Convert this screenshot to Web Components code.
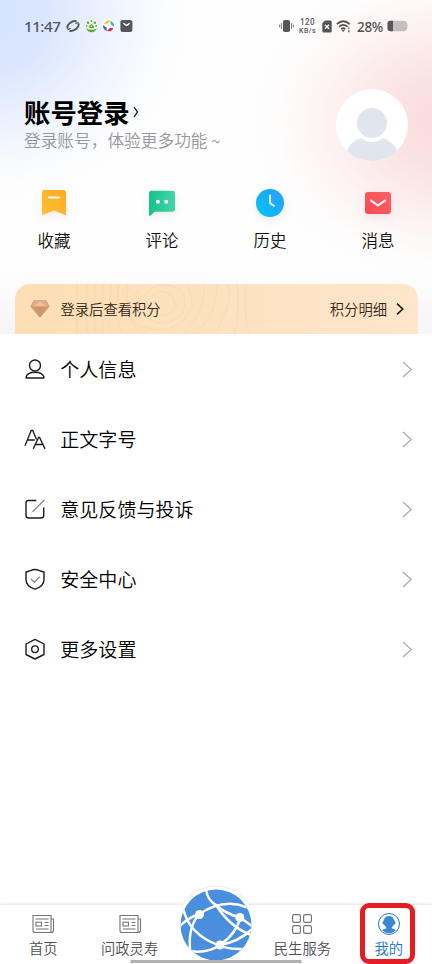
<!DOCTYPE html>
<html lang="zh-CN">
<head>
<meta charset="utf-8">
<title>我的</title>
<style>
html,body{margin:0;padding:0;background:#fff}
body{font-family:"Noto Sans CJK SC",sans-serif;font-weight:350;color:#111;overflow:hidden}
</style>
</head>
<body>
<my-app></my-app>
<script>
const define=(name,html,render)=>customElements.define(name,class extends HTMLElement{
  connectedCallback(){
    if(this.shadowRoot)return;
    const t=document.createElement('template');
    t.innerHTML=render?render(this):html;
    this.attachShadow({mode:'open'}).appendChild(t.content.cloneNode(true));
  }
});

define('status-bar',`
<style>
:host{display:flex;justify-content:space-between;align-items:center;height:52px;padding:0 24px;box-sizing:border-box;font-family:"Noto Sans",sans-serif;color:#50555e}
div{display:flex;align-items:center}
svg{display:block;flex:none}
.time{font-size:15.2px;font-weight:500;width:42px;line-height:20px;letter-spacing:-.5px}
.l svg{margin-right:4.5px}
.speed{font-family:Roboto,sans-serif;text-align:center;width:19px;margin:0 5px 0 4px;font-weight:500;color:#5c5a5b;white-space:nowrap;flex-direction:column}
.speed span{display:block;height:9px;line-height:9px;font-size:8.2px;letter-spacing:.3px}
.speed b{display:block;height:8px;line-height:8px;font-weight:500;font-size:7px;letter-spacing:.4px}
.pct{font-size:13.5px;font-weight:500;color:#504e50;width:27px;margin:1px 3px 0 5px;line-height:20px;white-space:nowrap;letter-spacing:-.3px}
.r{margin-right:-1px}
</style>
<div class="l"><span class="time">11:47</span>
<svg width="14" height="14" viewBox="0 0 14 14" fill="none" stroke="#50555e"><path d="M1.500 9.500C.5 5.500 6 1.200 10.500 2.200M12.500 4.500C13.500 8.500 8 12.800 3.500 11.800" stroke-width="1.900"/><path d="M1.500 9.500Q2.300 11.500 4.500 9.200M12.500 4.500Q11.700 2.500 9.500 4.800" stroke-width="1.200"/></svg>
<svg width="13" height="14" viewBox="0 0 13 14"><circle cx="6.5" cy="7" r="6.3" fill="#eff8e9"/><g fill="#55a92e"><circle cx="3" cy="3.8" r="1.2"/><circle cx="9.8" cy="3.7" r="1.2"/><circle cx="6.4" cy="2" r=".9"/><circle cx="1.7" cy="6.8" r=".9"/><circle cx="11.2" cy="6.8" r=".9"/><path d="M6.5 4.7L9.5 8 8 9H5L3.5 8Z"/><path d="M1.2 9.5Q6.5 12 11.8 9.5Q10 13.3 6.5 13.3T1.2 9.5"/></g><circle cx="6.5" cy="7.3" r=".8" fill="#fff"/></svg>
<svg width="13" height="14" viewBox="0 0 13 14"><circle cx="6.5" cy="7" r="6.3" fill="#fff"/><path d="M2 5.3Q4 .6 8.5 1.8L5.8 4.6Z" fill="#f3c522"/><path d="M8.5 1.8Q12.8 3.5 12 8L8.5 5Z" fill="#3ac1a4"/><path d="M11.4 9Q9.5 13.3 4.8 12.1L8 9Z" fill="#e51d61"/><path d="M4.8 12.1Q.4 10.3 1.1 6L4.7 8.7Z" fill="#246ce0"/></svg>
<svg width="13" height="14" viewBox="0 0 13 14"><rect x=".4" y="1" width="12" height="12" rx="2.5" fill="#50555e"/><path d="M3.8 4.5Q6.5 8 9.2 4.5" fill="none" stroke="#fff" stroke-width="1.3" stroke-linecap="round"/></svg>
</div>
<div class="r">
<svg width="15" height="14" viewBox="0 0 15 14" fill="#595658"><rect x="4" y="1" width="7" height="12" rx="1.8"/><path d="M2.4 4v6M12.6 4v6M.6 5.7v2.6M14.4 5.7v2.6" stroke="#777" stroke-width="1"/></svg>
<div class="speed"><span>120</span><b>KB/s</b></div>
<svg width="10" height="13" viewBox="0 0 10 13"><path d="M3 .5H8.2Q9.7.5 9.7 2V11Q9.7 12.5 8.2 12.5H1.8Q.3 12.5.3 11V3.2Z" fill="#565355"/><path d="M3 4.8L7 8.7M7 4.8L3 8.7" stroke="#fff" stroke-width="1.3"/></svg>
<svg style="margin-left:4px" width="16" height="13" viewBox="0 0 16 13" fill="none" stroke="#565355" stroke-width="1.700"><path d="M.8 4.1Q7.2-1.6 13.8 4.1M3 6.6Q7.2 3 11.6 6.6M5.1 9Q7.2 7.2 9.3 9"/><path d="M5.3 9.7H9.1L7.2 12Z" fill="#565355" stroke="none"/><path d="M12.8 7.3v2M12.8 10.3v2" stroke-width="1.2"/></svg>
<span class="pct">28%</span>
<svg width="22" height="12" viewBox="0 0 22 12"><rect x=".5" y=".7" width="19.6" height="10.6" rx="3" fill="#c5bfc1"/><path d="M6 .7H3.5Q.5.7.5 3.7V8.3Q.5 11.3 3.5 11.3H6Z" fill="#595658"/><path d="M20.5 4Q22 6 20.5 8Z" fill="#c5bfc1"/></svg>
</div>`);

define('user-avatar',`
<style>:host{display:block;width:72px;height:72px}svg{display:block}</style>
<svg width="72" height="72" viewBox="0 0 72 72"><defs><clipPath id="c"><circle cx="36" cy="36" r="36"/></clipPath></defs><circle cx="36" cy="36" r="36" fill="#fff"/><g clip-path="url(#c)" fill="#e0e5ee"><circle cx="36" cy="34" r="15"/><path d="M9 65Q15 52 24.5 49Q36 57 47.500 49Q57 52 63 65L53 76H19Z"/></g></svg>`);

define('profile-header',`
<style>
:host{display:flex;justify-content:space-between;align-items:center;height:73px;padding:0 24px;margin-top:36px}
.t{display:flex;align-items:center;font-size:26.400px;font-weight:700;line-height:30px;color:#000;margin-top:-2px}
.t svg{margin-left:3px;margin-top:1px}
.s{font-size:16.700px;line-height:22px;color:#97989c;font-weight:350;margin-top:2px;white-space:nowrap}
</style>
<div><div class="t"><slot name="title"></slot><svg width="6" height="12" viewBox="0 0 6 12"><path d="M1 1L4.400 6L1 11" fill="none" stroke="#111" stroke-width="1.300"/></svg></div><div class="s"><slot name="subtitle"></slot></div></div>
<user-avatar></user-avatar>`);

const quick={
fav:`<defs><linearGradient id="g" x1="1" y1="0" x2="0" y2="1"><stop stop-color="#ffab20"/><stop offset="1" stop-color="#ffbf36"/></linearGradient></defs><path d="M10 5H29.500Q32 5 32 7.500V29Q32 30.500 30.500 29.700L20 25.400L9.500 29.700Q8 30.500 8 29V7Q8 5 10 5Z" fill="url(#g)"/><path d="M15 12.600H25" stroke="#fff" stroke-width="2" stroke-linecap="round"/>`,
comment:`<defs><linearGradient id="g"><stop stop-color="#16c38c"/><stop offset="1" stop-color="#44d5a7"/></linearGradient></defs><path d="M9.500 5.800H30.300Q33 5.800 33 8.500V24Q33 26.800 30.300 26.800H12.500L8.600 30.600Q7 31.500 7 29.500V8.500Q7 5.800 9.500 5.800Z" fill="url(#g)"/><circle cx="15.900" cy="16.800" r="2" fill="#fff"/><circle cx="24.200" cy="16.800" r="2" fill="#fff"/>`,
history:`<defs><linearGradient id="g" x1="0" y1="1" x2="1" y2="0"><stop stop-color="#00c5f5"/><stop offset="1" stop-color="#2b9dff"/></linearGradient></defs><circle cx="20" cy="18" r="14" fill="url(#g)"/><path d="M20 10.500V18L23.800 20.700" fill="none" stroke="#fff" stroke-width="2" stroke-linecap="round" stroke-linejoin="round"/>`,
message:`<defs><linearGradient id="g" x1="0" y1="1" x2="1" y2="0"><stop stop-color="#ff4652"/><stop offset="1" stop-color="#fa6467"/></linearGradient></defs><rect x="7" y="7" width="26" height="22" rx="3" fill="url(#g)"/><path d="M13 15.600L20 20.500L27 15.600" fill="none" stroke="#fff" stroke-width="2" stroke-linecap="round" stroke-linejoin="round"/>`};
define('quick-action','',e=>`
<style>
:host{display:flex;flex-direction:column;align-items:center;font-size:16.500px;line-height:24px;color:#111}
svg{display:block;filter:drop-shadow(0 3px 4px rgba(70,50,50,.09))}span{margin-top:3px}
</style><svg width="40" height="40" viewBox="0 0 40 40">${quick[e.getAttribute('icon')]}</svg><span><slot></slot></span>`);

define('points-banner',`
<style>
:host{display:flex;align-items:center;height:50px;box-sizing:border-box;margin:30px 14px 0 14.500px;padding:0 14px 0 15px;border-radius:15px 15px 0 0;background:linear-gradient(90deg,#fddeb5,#fee6cb);font-size:14.300px;color:#30261a;position:relative;overflow:hidden}
.w{position:absolute;left:0;top:0}
.gem{margin-right:11px;flex:none}
.more{display:flex;align-items:center;margin-left:auto}
.more svg{margin-left:9px}
span{line-height:20px;position:relative;top:-.5px;white-space:nowrap}
</style>
<svg class="w" width="403" height="50" fill="none" stroke="#d8a871" stroke-opacity=".16" stroke-width=".8"><path d="M135 15Q141 5 151 8T160 25Q150 37 139 27T135 15Z"/><path d="M129 12Q139-3 157 2T168 29Q149 47 132 33T129 12Z"/><path d="M122 8Q131-8 154-7T177 23Q163 52 132 44T122 8Z"/><path d="M113-2Q108 37 128 50M190-2Q190 32 165 52M201-2Q205 27 178 52M104-2Q99 34 108 52M213-2Q217 24 207 33L201 52M88-2V52M97-2Q91 27 96 52M72 0V50M80 0V50M62 0V50M222-2Q226 25 219 52M231-2Q228 24 234 52"/></svg>
<svg class="gem" width="20" height="18" viewBox="0 0 20 18"><path d="M4 .8H16L19.200 6.500 10 17.200.8 6.500Z" fill="#d09c75" stroke="#d09c75" stroke-linejoin="round"/><path d="M4 .8H16L19.200 6.500H.8Z" fill="#e0ac86"/><path d="M4 6.500L10 1L16 6.500Z" fill="#f3bd98"/><path d="M4 6.500H16L10 17Z" fill="#cb9570"/></svg>
<span><slot></slot></span>
<div class="more"><span><slot name="detail"></slot></span><svg width="8" height="12" viewBox="0 0 8 12"><path d="M1 .7L6.700 6L1 11.300" fill="none" stroke="#211a12" stroke-width="1.600"/></svg></div>`);

const icons={
person:`<circle cx="11" cy="7.500" r="5.500"/><path d="M2 19.400C2.800 15.800 6 14.300 11 14.300S19.200 15.800 20 19.400Q20 20 19.500 20H2.500Q2 20 2 19.400Z"/>`,
font:`<path d="M1 17.800L7.200 2.500H8.700L12.500 11.500M3.400 12H10.800M9.200 20.900L14.600 9.500H15.600L21 20.900M11.500 16.500H18.700" stroke-width="1.300"/>`,
edit:`<path d="M12.300 2.500H4.500Q2 2.500 2 5V17.500Q2 20 4.500 20H17.200Q19.700 20 19.700 17.500V9.500"/><path d="M8.500 13.800L20.500 1.800" stroke="#777" stroke-width="1.200"/>`,
shield:`<path d="M2 4C5.500 3.500 8 1.500 11 1.500S16.500 3.500 20 4V11.500C20 16.500 16.500 19.500 11 21.200C5.500 19.500 2 16.500 2 11.500Z" stroke-linejoin="round"/><path d="M7 11L10.300 14.200L15.800 8.700" stroke="#888"/>`,
setting:`<path d="M11 1.300L20 6V16.500L11 21L2 16.500V6Z" stroke-linejoin="round"/><circle cx="11" cy="11.200" r="3.300"/>`};
define('menu-row','',e=>`
<style>
:host{display:flex;align-items:center;height:70px;padding:0 19px 0 23.500px;font-size:19.050px;color:#000}
svg{flex:none;fill:none;stroke:#1c1c1c;stroke-width:1.400}
span{flex:1;margin-left:14.800px;line-height:28px}
</style><svg width="22" height="22" viewBox="0 0 22 22">${icons[e.getAttribute('icon')]}</svg><span><slot></slot></span><svg width="11" height="17" viewBox="0 0 11 17" style="stroke:#aaa;stroke-width:1.200"><path d="M1 1L9.200 8.500L1 16"/></svg>`);

const news=`<g fill="none" stroke="#757575" stroke-width="1.100"><path d="M2 3.500H20V20.500H4Q2 20.500 2 18.500Z"/><path d="M20 7H22.500V18.500Q22.500 20.500 20 20.500M4.500 7H17.500M13.500 10.500H17.500M13.500 13.500H17.500M5 17H17.500"/><rect x="5" y="10.200" width="5.500" height="3.800"/></g>`;
const tabs={home:news,ask:news,
service:`<g fill="none" stroke="#757575" stroke-width="1.200"><rect x="2.600" y="2.600" width="7.800" height="7.800" rx="1.600"/><rect x="13.600" y="2.600" width="7.800" height="7.800" rx="1.600"/><rect x="2.600" y="13.600" width="7.800" height="7.800" rx="1.600"/><rect x="13.600" y="13.600" width="7.800" height="7.800" rx="1.600"/></g>`,
me:`<circle cx="12" cy="12" r="10.500" fill="#fff" stroke="#2478c8" stroke-width="1"/><path d="M12 4C14.800 4 16.300 5.200 17 8L18.800 11L15.400 14.600L14.500 16.300L18.900 18Q16 21.300 12 21.300T5.100 18L9.500 16.300L8.600 14.600L5.200 11L7 8C7.700 5.200 9.200 4 12 4Z" fill="#3a86d4"/>`};
define('tab-item','',e=>`
<style>
:host{display:flex;flex-direction:column;align-items:center;padding-top:7px;font-size:14.300px;line-height:20px;color:#505050;position:relative}
:host([active]){color:#1874c9}
svg{display:block}span{margin-top:1.500px;white-space:nowrap}
:host([active])::after{content:"";position:absolute;left:14.400px;top:-2px;width:55px;height:61px;box-sizing:border-box;border:5px solid #e61c23;border-radius:9px}
</style><svg width="24" height="24" viewBox="0 0 24 24">${tabs[e.getAttribute('icon')]}</svg><span><slot></slot></span>`);

define('globe-button',`
<style>:host{display:block;position:relative}svg{position:absolute;left:3.200px;top:-20px}</style>
<svg width="80" height="80" viewBox="0 0 80 80"><defs><clipPath id="q"><circle cx="40" cy="40" r="35.500"/></clipPath><clipPath id="top"><path d="M-5-5H85V20H-5Z"/></clipPath></defs>
<circle cx="40" cy="40" r="39.500" fill="#ededed" clip-path="url(#top)"/><circle cx="40" cy="40.500" r="39" fill="#fff"/><circle cx="40" cy="40" r="35.500" fill="#4a8fde"/>
<g clip-path="url(#q)" fill="none" stroke="#fff" stroke-width="2.500" stroke-linecap="round"><path d="M30 4Q31 15 40 20Q50 29 64 32.500"/><path d="M7 23Q12 45 33 56Q50 65 66 64"/><path d="M3 42Q11 33 23.500 29Q47 13 70 22"/><path d="M23.500 29Q11 42 14.500 69"/><path d="M40 20Q54 42 75 50"/><path d="M64 32.500Q61 48 44 60Q31 69 13 66"/><path d="M44 60Q62 57 75 45"/><path d="M64 32.500L76 41"/></g>
<g fill="#fff"><circle cx="23.500" cy="29.500" r="4.500"/><circle cx="63.800" cy="32.500" r="4.500"/><circle cx="44" cy="60" r="4.500"/></g></svg>`);

define('tab-bar',`
<style>
:host{display:grid;grid-template-columns:repeat(5,1fr);height:59px;margin-top:auto;background:#fff;box-shadow:0 -1px 3px rgba(0,0,0,.12);position:relative}
i{position:absolute;left:130px;bottom:1px;width:172px;height:3px;border-radius:2px;background:#b3b3b5}
</style><slot></slot><i></i>`);

define('my-app',`
<style>
:host{display:flex;flex-direction:column;width:432px;height:964px;overflow:hidden;background:#fff}
.top{height:334px;background:
 linear-gradient(180deg,rgba(245,245,246,0) 270px,rgba(245,245,246,1) 334px),
 radial-gradient(ellipse 205px 165px at 450px 122px,rgba(250,217,217,.95) 0%,rgba(250,219,219,.78) 30%,rgba(252,228,228,.36) 65%,rgba(253,240,240,.1) 87%,rgba(255,255,255,0) 100%),
 radial-gradient(ellipse 215px 200px at -15px 15px,#d4e2fe 0%,rgba(214,227,255,.85) 30%,rgba(228,237,255,.45) 65%,rgba(242,246,255,.12) 87%,rgba(255,255,255,0) 100%),#fefefe}
.quick{display:grid;grid-template-columns:repeat(4,1fr);margin-top:24px;height:69px}
</style>
<div class="top"><status-bar></status-bar>
<profile-header><span slot="title">账号登录</span><span slot="subtitle">登录账号，体验更多功能 ~</span></profile-header>
<div class="quick"><quick-action icon="fav">收藏</quick-action><quick-action icon="comment">评论</quick-action><quick-action icon="history">历史</quick-action><quick-action icon="message">消息</quick-action></div>
<points-banner>登录后查看积分<span slot="detail">积分明细</span></points-banner></div>
<nav><menu-row icon="person">个人信息</menu-row><menu-row icon="font">正文字号</menu-row><menu-row icon="edit">意见反馈与投诉</menu-row><menu-row icon="shield">安全中心</menu-row><menu-row icon="setting">更多设置</menu-row></nav>
<tab-bar><tab-item icon="home">首页</tab-item><tab-item icon="ask">问政灵寿</tab-item><globe-button></globe-button><tab-item icon="service">民生服务</tab-item><tab-item icon="me" active>我的</tab-item></tab-bar>`);
</script>
</body>
</html>
